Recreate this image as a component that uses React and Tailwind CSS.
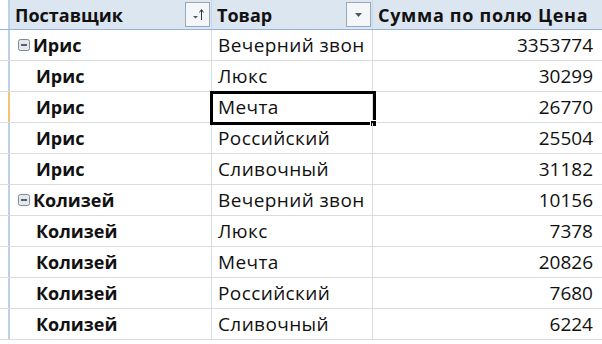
import React from "react";

const rows = [
  { s: "Ирис", t: "Вечерний звон", v: "3353774", first: true },
  { s: "Ирис", t: "Люкс", v: "30299" },
  { s: "Ирис", t: "Мечта", v: "26770", sel: true },
  { s: "Ирис", t: "Российский", v: "25504" },
  { s: "Ирис", t: "Сливочный", v: "31182" },
  { s: "Колизей", t: "Вечерний звон", v: "10156", first: true },
  { s: "Колизей", t: "Люкс", v: "7378" },
  { s: "Колизей", t: "Мечта", v: "20826" },
  { s: "Колизей", t: "Российский", v: "7680" },
  { s: "Колизей", t: "Сливочный", v: "6224" },
];

function Minus() {
  return (
    <svg width="12" height="12" viewBox="0 0 12 12" className="shrink-0">
      <rect x="0.5" y="0.5" width="11" height="11" rx="2" fill="#e4e8ec" stroke="#7d8a96" />
      <line x1="3" y1="6" x2="9" y2="6" stroke="#2b3540" strokeWidth="1.5" />
    </svg>
  );
}

function SortBtn() {
  return (
    <div className="w-[25px] h-[25px] border border-[#9aa7b5] bg-[#f3f6fa] flex items-center justify-center">
      <svg width="19" height="19" viewBox="0 0 19 19">
        <path d="M5 11 L10 11 L7.5 13.5 Z" fill="#555" />
        <line x1="13.5" y1="5" x2="13.5" y2="15" stroke="#333" strokeWidth="1" />
        <path d="M11.5 7.5 L13.5 4.5 L15.5 7.5" fill="none" stroke="#333" strokeWidth="1" />
      </svg>
    </div>
  );
}

function FilterBtn() {
  return (
    <div className="w-[25px] h-[25px] border border-[#9aa7b5] bg-[#f3f6fa] flex items-center justify-center">
      <svg width="19" height="19" viewBox="0 0 19 19">
        <path d="M6 8 L13 8 L9.5 12 Z" fill="#555" />
      </svg>
    </div>
  );
}

export default function App() {
  return (
    <div
      className="w-[602px] h-[344px] bg-white overflow-hidden text-[19px] leading-none text-[#111]"
      style={{ fontFamily: '"Open Sans", "Liberation Sans", sans-serif' }}
    >
      <div className="flex h-[30px] border-b border-[#95b3d7]">
        <div className="w-[10px] border-r-2 border-[#bcd0e6] bg-white" />
        <div className="w-[202px] bg-[#dce6f1] border-r border-[#c8d6e6] flex items-center justify-between pl-[5px] pr-[1px] font-bold text-[18px]">
          <span>Поставщик</span>
          <SortBtn />
        </div>
        <div className="w-[161px] bg-[#dce6f1] border-r border-[#c8d6e6] flex items-center justify-between pl-[5px] pr-[1px] font-bold text-[18px]">
          <span>Товар</span>
          <FilterBtn />
        </div>
        <div className="flex-1 bg-[#dce6f1] flex items-center pl-[5px] font-bold text-[18px] tracking-[0.7px]">
          <span>Сумма по полю Цена</span>
        </div>
      </div>
      {rows.map((r, i) => (
        <div key={i} className="flex h-[31px] border-b border-[#dadcdd]">
          <div className={`w-[10px] border-r-2 bg-white ${r.sel ? "border-[#f5c27a]" : "border-[#bcd0e6]"}`} />
          <div className={`w-[202px] border-r border-[#dadcdd] flex items-center font-bold text-[18px] ${r.first ? "pl-[8px] gap-[3px]" : "pl-[26px]"}`}>
            {r.first && <Minus />}
            <span>{r.s}</span>
          </div>
          <div className="w-[161px] border-r border-[#dadcdd] flex items-center pl-[6px] relative tracking-[0.4px]">
            <span>{r.t}</span>
            {r.sel && (
              <>
                <div className="absolute left-[-2px] top-[-1px] right-[-4px] bottom-[-3px] border-[3px] border-black" />
                <div className="absolute right-[-5px] bottom-[-5px] w-[7px] h-[7px] bg-black border border-white" />
              </>
            )}
          </div>
          <div className="flex-1 flex items-center justify-end pr-[9px]">
            <span>{r.v}</span>
          </div>
        </div>
      ))}
    </div>
  );
}
